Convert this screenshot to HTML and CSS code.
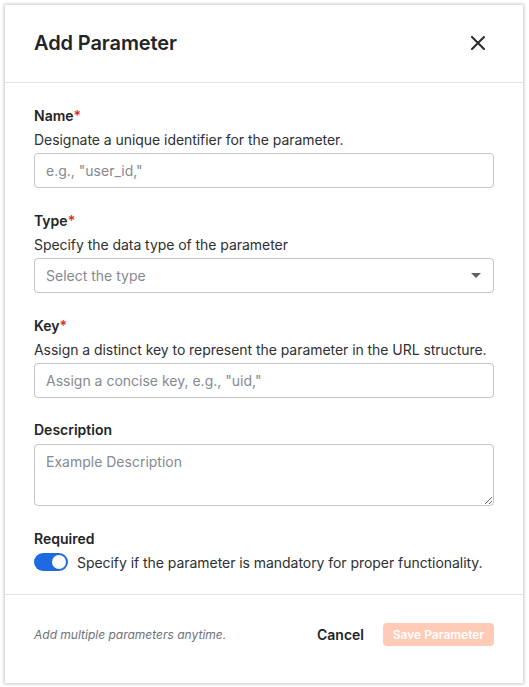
FILE: index.html
```html
<!DOCTYPE html>
<html lang="en">
<head>
<meta charset="utf-8">
<title>Add Parameter</title>
<link rel="stylesheet" href="styles.css">
</head>
<body>
<div class="dialog">
  <header class="dialog-header">
    <h1 class="dialog-title">Add Parameter</h1>
    <button class="close-btn" aria-label="Close">
      <svg width="14" height="14" viewBox="0 0 14 14"><path d="M1 1L13 13M13 1L1 13" stroke="#2b2b2b" stroke-width="2" stroke-linecap="round"/></svg>
    </button>
  </header>
  <div class="dialog-body">
    <div class="field">
      <label class="field-label">Name<span class="req">*</span></label>
      <p class="field-help">Designate a unique identifier for the parameter.</p>
      <input class="text-input" type="text" placeholder="e.g., &quot;user_id,&quot;">
    </div>
    <div class="field">
      <label class="field-label">Type<span class="req">*</span></label>
      <p class="field-help">Specify the data type of the parameter</p>
      <div class="select">
        <span class="select-placeholder">Select the type</span>
        <svg class="select-caret" width="10" height="5" viewBox="0 0 10 5"><path d="M0 0H10L5 5Z" fill="#5f6368"/></svg>
      </div>
    </div>
    <div class="field">
      <label class="field-label">Key<span class="req">*</span></label>
      <p class="field-help">Assign a distinct key to represent the parameter in the URL structure.</p>
      <input class="text-input" type="text" placeholder="Assign a concise key, e.g., &quot;uid,&quot;">
    </div>
    <div class="field field-desc">
      <label class="field-label">Description</label>
      <textarea class="text-area" placeholder="Example Description"></textarea>
    </div>
    <div class="field">
      <label class="field-label field-label-tight">Required</label>
      <div class="toggle-row">
        <span class="toggle"><span class="toggle-knob"></span></span>
        <span class="toggle-text">Specify if the parameter is mandatory for proper functionality.</span>
      </div>
    </div>
  </div>
  <footer class="dialog-footer">
    <span class="footer-note">Add multiple parameters anytime.</span>
    <div class="footer-actions">
      <button class="btn-cancel">Cancel</button>
      <button class="btn-save" disabled>Save Parameter</button>
    </div>
  </footer>
</div>
</body>
</html>
```

FILE: styles.css
```css
* { box-sizing: border-box; }
html, body { margin: 0; padding: 0; background: #ffffff; }
body {
  font-family: Inter, "Noto Sans", sans-serif;
  color: #222426;
  padding: 5px 6px 4px 5px;
}
.dialog {
  width: 518px;
  height: 678px;
  background: #fff;
  box-shadow: 0 0 3px 1px rgba(0,0,0,0.22);
  display: flex;
  flex-direction: column;
}
.dialog-header {
  height: 78px;
  padding: 0 29px 2px;
  display: flex;
  align-items: center;
  justify-content: space-between;
  border-bottom: 1px solid #e2e3e5;
}
.dialog-title {
  margin: 0;
  font-size: 20px;
  font-weight: 600;
  color: #222426;
  letter-spacing: -0.1px;
}
.close-btn {
  border: 0;
  background: none;
  padding: 0;
  width: 14px;
  height: 14px;
  margin-right: 9px;
  display: flex;
}
.dialog-body {
  padding: 23px 29px 22px;
  display: flex;
  flex-direction: column;
  gap: 23px;
  border-bottom: 1px solid #e2e3e5;
}
.field { display: flex; flex-direction: column; }
.field-desc { margin-top: -1px; }
.field-label {
  font-size: 14px;
  line-height: 20px;
  font-weight: 600;
  color: #222426;
  margin-bottom: 4px;
}
.field-label-tight { margin-bottom: 3px; }
.req { color: #e0282e; }
.field-help {
  margin: 0 0 3px;
  font-size: 14px;
  line-height: 20px;
  color: #2e3033;
  letter-spacing: -0.05px;
}
.text-input, .select, .text-area {
  width: 460px;
  border: 1px solid #c3c6ca;
  border-radius: 4px;
  font-family: Inter, "Noto Sans", sans-serif;
  font-size: 14px;
  color: #222;
  background: #fff;
}
.text-input {
  height: 35px;
  padding: 0 11px;
}
.text-input::placeholder, .text-area::placeholder { color: #858a91; }
.select {
  height: 35px;
  padding: 0 12px 0 11px;
  display: flex;
  align-items: center;
  justify-content: space-between;
}
.select-placeholder { color: #858a91; }
.text-area {
  height: 62px;
  padding: 8px 11px;
  resize: vertical;
  line-height: 18px;
}
.toggle-row {
  display: flex;
  align-items: center;
  gap: 9px;
  height: 20px;
}
.toggle {
  width: 34px;
  height: 18px;
  border-radius: 9px;
  background: #1f6ae0;
  display: flex;
  align-items: center;
  justify-content: flex-end;
  padding: 0 2px;
}
.toggle-knob {
  width: 14px;
  height: 14px;
  border-radius: 50%;
  background: #fff;
}
.toggle-text {
  font-size: 14px;
  color: #2e3033;
  letter-spacing: -0.05px;
}
.dialog-footer {
  flex: 1;
  padding: 28px 29px 0;
  display: flex;
  justify-content: space-between;
  align-items: flex-start;
}
.footer-note {
  font-size: 12px;
  font-style: italic;
  color: #6d7278;
  line-height: 23px;
}
.footer-actions {
  display: flex;
  align-items: center;
  gap: 19px;
}
.btn-cancel {
  border: 0;
  background: none;
  padding: 0;
  font-family: Inter, "Noto Sans", sans-serif;
  font-size: 14px;
  font-weight: 600;
  color: #222426;
  height: 23px;
}
.btn-save {
  border: 0;
  border-radius: 4px;
  background: #ffcbb6;
  color: #fff;
  font-family: Inter, "Noto Sans", sans-serif;
  font-size: 12px;
  font-weight: 600;
  height: 23px;
  width: 111px;
  padding: 0;
}
```
